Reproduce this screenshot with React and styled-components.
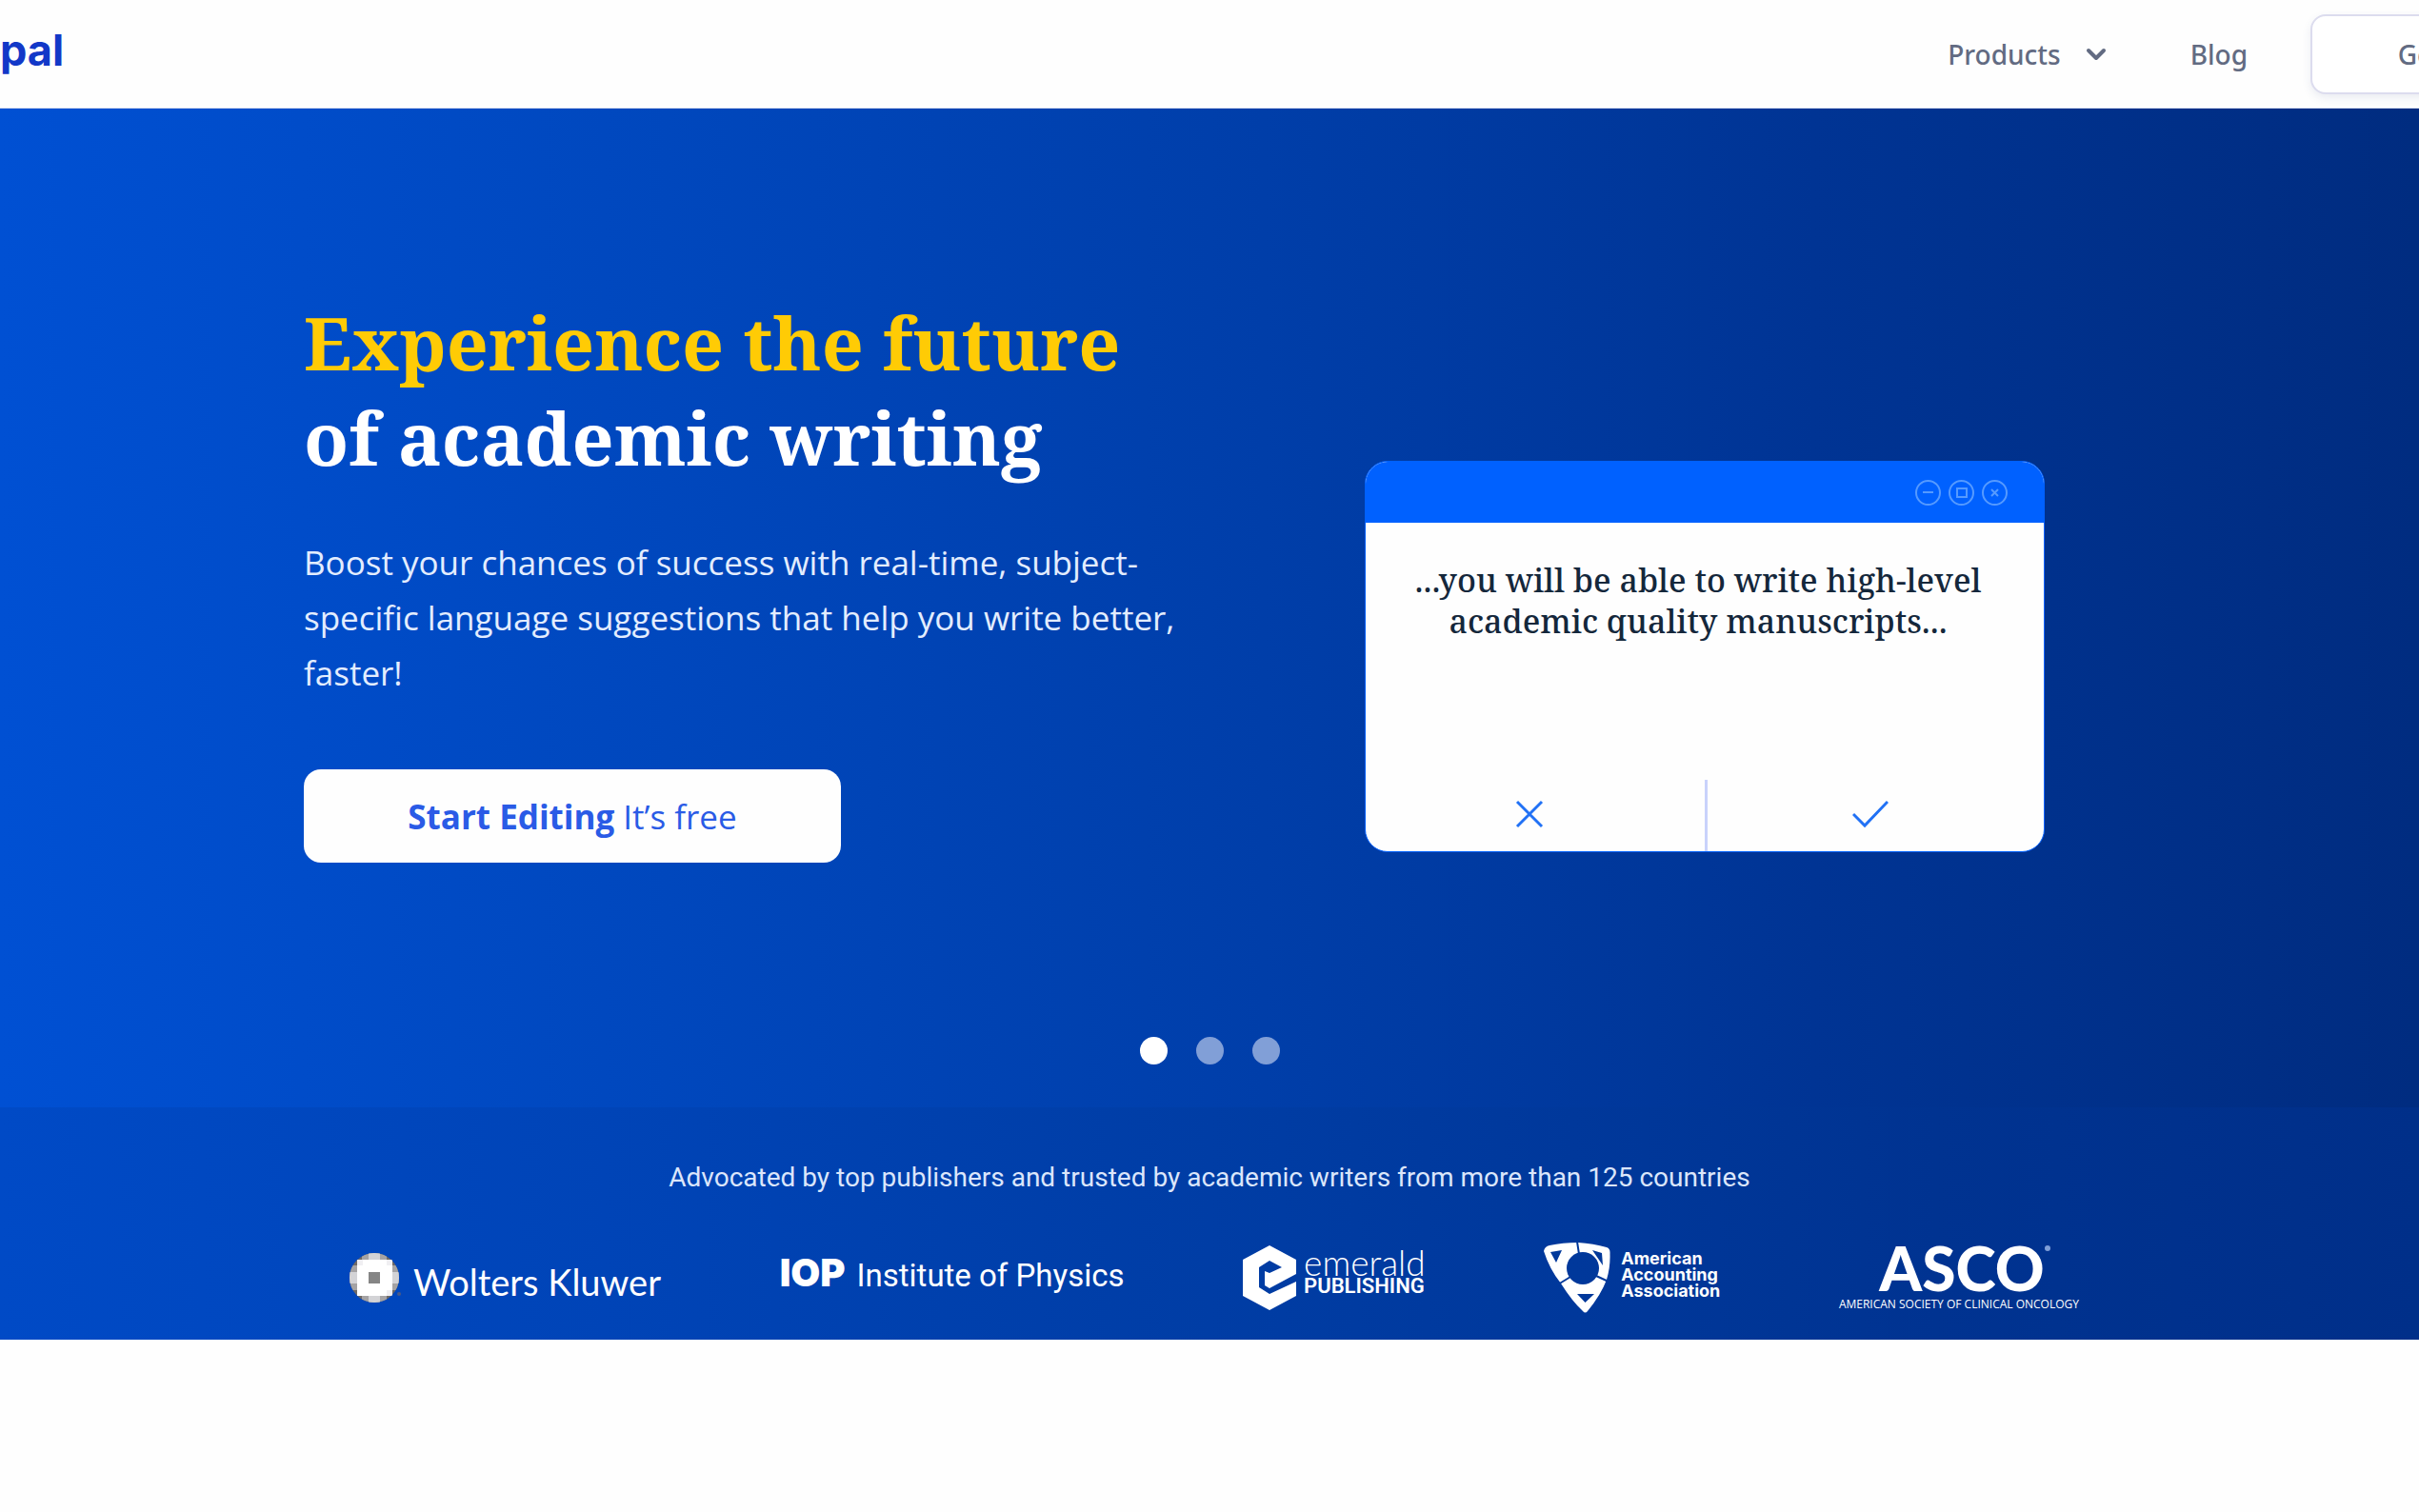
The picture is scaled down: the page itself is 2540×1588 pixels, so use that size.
import React, { useState } from "react";
import styled, { createGlobalStyle, css } from "styled-components";

const sans = `"Open Sans", "Noto Sans", sans-serif`;
const serif = `"Noto Serif", "DejaVu Serif Condensed", serif`;

const GlobalStyle = createGlobalStyle`
  *, *::before, *::after { box-sizing: border-box; }
  body { margin: 0; background: #fefefe; font-family: ${sans}; overflow-x: hidden; }
  h1, p { margin: 0; }
  button { font: inherit; cursor: pointer; }
`;

const Header = styled.header`
  display: flex;
  justify-content: space-between;
  align-items: center;
  height: 114px;
  overflow: hidden;
  background: #fefefe;
  border-bottom: 1px solid #dcdff2;
`;

const Brand = styled.a`
  padding-bottom: 8px;
  font: 700 45px/60px Inter, sans-serif;
  color: #1238c8;
  text-decoration: none;
`;

const Nav = styled.nav`
  display: flex;
  align-items: center;
  flex-shrink: 0;
  gap: 66px;
  margin-right: -222px;
  font-family: "Noto Sans", sans-serif;
  font-size: 28px;
  font-weight: 500;
  line-height: 40px;
`;

const navText = css`
  color: #626b82;
  text-decoration: none;
`;

const MenuButton = styled.button`
  ${navText}
  display: flex;
  align-items: center;
  gap: 26px;
  padding: 0 22px 0 0;
  border: 0;
  background: none;
`;

const NavLink = styled.a`
  ${navText}
`;

const OutlineButton = styled.button`
  ${navText}
  width: 336px;
  height: 84px;
  border: 2px solid #dcdcee;
  border-radius: 16px;
  background: #fff;
  box-shadow: 0 4px 10px rgba(60, 80, 140, 0.1);
`;

const Hero = styled.section`
  display: flex;
  flex-direction: column;
  padding: 196px 393px 45px 319px;
  background: linear-gradient(90deg, #0050d3 0%, #0048bf 25%, #003fab 50%, #003494 75%, #002c80 100%);
`;

const HeroColumns = styled.div`
  display: flex;
  justify-content: space-between;
  align-items: flex-start;
`;

const Pitch = styled.div`
  display: flex;
  flex-direction: column;
  align-items: flex-start;
  width: 930px;
`;

const Title = styled.h1`
  font: 700 77px/100px ${serif};
  color: #fff;
`;

const Highlight = styled.span`
  display: block;
  color: #ffcb05;
`;

const Lead = styled.p`
  margin-top: 52px;
  font-size: 35px;
  line-height: 58px;
  color: #e3edff;
`;

const StartButton = styled.button`
  width: 564px;
  height: 98px;
  margin-top: 72px;
  border: 0;
  border-radius: 18px;
  background: #fefefe;
  color: #2a5be6;
  font-size: 35px;
  strong { font-weight: 700; }
`;

const Window = styled.div`
  display: flex;
  flex-direction: column;
  width: 714px;
  height: 411px;
  margin-top: 174px;
  border-radius: 24px;
  border: 1px solid #0061ff;
  background: #fefefe;
  overflow: hidden;
`;

const TitleBar = styled.div`
  display: flex;
  justify-content: flex-end;
  align-items: center;
  gap: 8px;
  height: 64px;
  padding-right: 38px;
  background: #0061ff;
`;

const Sentence = styled.p`
  flex: 1;
  padding: 39px 14px 0 0;
  font: 500 34px/43px ${serif};
  text-align: center;
  color: #14273b;
`;

const Choices = styled.div`
  display: grid;
  grid-template-columns: 1fr 1fr;
  height: 75px;
`;

const Choice = styled.button`
  display: flex;
  justify-content: center;
  padding: 21px 12px 0 0;
  border: 0;
  background: none;
  color: #2171f5;
  & + & { border-left: 3px solid #c9d2fb; }
`;

const Dots = styled.div`
  display: flex;
  align-self: center;
  gap: 30px;
  margin: 183px 0 0 74px;
`;

const Dot = styled.button`
  width: 29px;
  height: 29px;
  padding: 0;
  border: 0;
  border-radius: 50%;
  background: ${(p) => (p.$on ? "#fff" : "#819fd7")};
`;

const Trust = styled.section`
  padding: 56px 357px 28px;
  background: linear-gradient(90deg, #004ac6 0%, #0044b7 25%, #003da5 50%, #003391 80%, #002f89 100%);
`;

const TrustText = styled.p`
  font: 400 28px/36px Roboto, sans-serif;
  text-align: center;
  color: #dbe6fb;
`;

const LogoRow = styled.div`
  display: flex;
  justify-content: space-between;
  align-items: center;
  height: 74px;
  margin-top: 50px;
  padding-left: 10px;
  color: #fff;
`;

const Logo = styled.div`
  display: flex;
  align-items: ${(p) => p.$align || "center"};
  gap: ${(p) => p.$gap}px;
  padding-bottom: ${(p) => p.$lift || 0}px;
`;

const Stack = styled.div`
  display: flex;
  flex-direction: column;
  align-items: ${(p) => p.$align || "flex-start"};
  padding-bottom: ${(p) => p.$lift || 0}px;
`;

const Word = styled.span`
  font-family: ${(p) => p.$font || "Lato"}, sans-serif;
  font-size: ${(p) => p.$size}px;
  font-weight: ${(p) => p.$weight || 400};
  line-height: ${(p) => p.$line}px;
  white-space: nowrap;
`;

const AscoName = styled.div`
  display: flex;
  align-items: flex-start;
  padding-left: 12px;
`;

const Registered = styled.i`
  width: 6px;
  height: 6px;
  margin-top: 4px;
  border-radius: 50%;
  background: #7f9fd8;
`;

const Chevron = () => (
  <svg width="22" height="14" viewBox="0 0 22 14" fill="none" stroke="#626b82" strokeWidth="4" strokeLinecap="round" strokeLinejoin="round" aria-hidden="true">
    <path d="M3 3l8 8 8-8" />
  </svg>
);

const WindowIcon = ({ children }) => (
  <svg width="27" height="27" viewBox="0 0 27 27" fill="none" stroke="#559aff" strokeWidth="2" aria-hidden="true">
    <circle cx="13.5" cy="13.5" r="12.5" />
    {children}
  </svg>
);

const WoltersMark = () => (
  <svg width="55" height="52" viewBox="0 0 55 52" aria-hidden="true">
    <clipPath id="globe"><circle cx="26" cy="26" r="26" /></clipPath>
    <g clipPath="url(#globe)">
      <path fill="#6f6a66" d="M0 0h52v52H0z" />
      <path fill="#a5a3a4" d="M0 13h52v26H0zM13 0h26v52H13z" />
      <path fill="#d3d3d6" d="M20 0h12v52H20zM0 20h52v12H0z" />
      <path fill="#fff" d="M8 7h37v38H8z" />
      <path fill="#f0eff2" d="M8 7h6v6H8zM39 7h6v6h-6zM39 39h6v6h-6z" />
      <path fill="#858585" d="M20 20h12v12H20z" />
    </g>
    <circle cx="52" cy="43" r="2" fill="#4a5a86" />
  </svg>
);

const EmeraldMark = () => (
  <svg width="56" height="68" viewBox="0 0 56 68" aria-hidden="true">
    <path
      fill="#fff"
      d="M28 0L56 15V30L28 45L23 42V27L28 29L41 23L28 16L17 23V44L28 51L56 38V53L28 68L0 53V15Z"
    />
  </svg>
);

const AccountingMark = () => (
  <svg width="70" height="74" viewBox="0 0 70 74" aria-hidden="true">
    <mask id="shield">
      <path fill="#fff" d="M0 9Q1 4 6 3Q20 0 36 0Q52 1 66 5Q70 6 69.500 12Q70 26 66 39Q60 55 46 72Q43.500 75 41 72Q30 62 18 43Q6 28 0 9Z" />
      <circle cx="41" cy="27" r="17" />
      <path d="M7 10L19 8L13 21ZM51 8L61 11L62 24ZM35 54H53L43.500 63Z" />
      <path stroke="#000" strokeWidth="2" d="M35 -1L37 12M68 41L55 35M15 44L28 36" />
    </mask>
    <path fill="#fff" mask="url(#shield)" d="M0 0h70v74H0z" />
  </svg>
);

export default function App() {
  const [slide, setSlide] = useState(0);
  return (
    <>
      <GlobalStyle />
      <Header>
        <Brand href="#">pal</Brand>
        <Nav>
          <MenuButton type="button">Products<Chevron /></MenuButton>
          <NavLink href="#blog">Blog</NavLink>
          <OutlineButton type="button">Get Started</OutlineButton>
        </Nav>
      </Header>
      <main>
        <Hero>
          <HeroColumns>
            <Pitch>
              <Title><Highlight>Experience the future</Highlight>of academic writing</Title>
              <Lead>
                Boost your chances of success with real-time, subject-specific language
                suggestions that help you write better, faster!
              </Lead>
              <StartButton type="button"><strong>Start Editing</strong> It’s free</StartButton>
            </Pitch>
            <Window>
              <TitleBar>
                <WindowIcon><path d="M8 13h11" /></WindowIcon>
                <WindowIcon><path d="M9 9h10v9H9z" /></WindowIcon>
                <WindowIcon><path d="M10 10l7 7M17 10l-7 7" /></WindowIcon>
              </TitleBar>
              <Sentence>...you will be able to write high-level<br />academic quality manuscripts...</Sentence>
              <Choices>
                <Choice type="button" aria-label="Reject">
                  <svg width="30" height="30" viewBox="0 0 30 30" fill="none" stroke="currentColor" strokeWidth="3"><path d="M2 2l26 26M28 2L2 28" /></svg>
                </Choice>
                <Choice type="button" aria-label="Accept">
                  <svg width="38" height="30" viewBox="0 0 38 30" fill="none" stroke="currentColor" strokeWidth="3"><path d="M1 15l12 12L37 2" /></svg>
                </Choice>
              </Choices>
            </Window>
          </HeroColumns>
          <Dots>
            {[0, 1, 2].map((i) => (
              <Dot key={i} type="button" $on={slide === i} aria-label={`Slide ${i + 1}`} onClick={() => setSlide(i)} />
            ))}
          </Dots>
        </Hero>
        <Trust>
          <TrustText>Advocated by top publishers and trusted by academic writers from more than 125 countries</TrustText>
          <LogoRow>
            <Logo $gap={12} $align="flex-end">
              <WoltersMark />
              <Word $size={38} $line={44}>Wolters Kluwer</Word>
            </Logo>
            <Logo $gap={12} $align="baseline" $lift={8}>
              <Word $font="Inter" $size={40} $weight={900} $line={44}>IOP</Word>
              <Word $font="Roboto" $size={33} $line={44}>Institute of Physics</Word>
            </Logo>
            <Logo $gap={8}>
              <EmeraldMark />
              <Stack $lift={12}>
                <Word $size={37} $weight={300} $line={30}>emerald</Word>
                <Word $font="Roboto" $size={22} $weight={600} $line={20}>PUBLISHING</Word>
              </Stack>
            </Logo>
            <Logo $gap={11}>
              <AccountingMark />
              <Stack $lift={8}>
                <Word $font="Inter" $size={18} $weight={700} $line={17}>American</Word>
                <Word $font="Inter" $size={18} $weight={700} $line={17}>Accounting</Word>
                <Word $font="Inter" $size={18} $weight={700} $line={17}>Association</Word>
              </Stack>
            </Logo>
            <Stack $align="center">
              <AscoName>
                <Word $size={64} $weight={900} $line={56}>ASCO</Word>
                <Registered />
              </AscoName>
              <Word $font="Open Sans" $size={12} $line={20}>AMERICAN SOCIETY OF CLINICAL ONCOLOGY</Word>
            </Stack>
          </LogoRow>
        </Trust>
      </main>
    </>
  );
}
